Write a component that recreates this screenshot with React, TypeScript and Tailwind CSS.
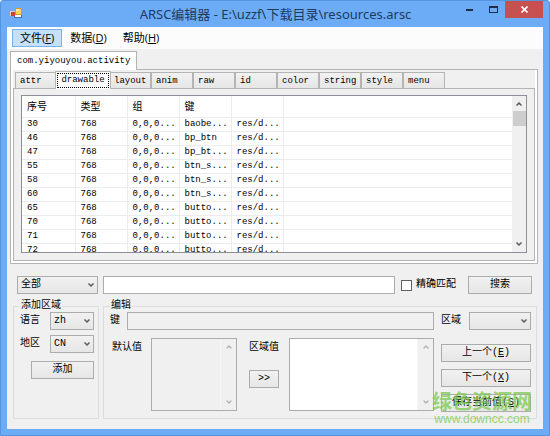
import { useState } from "react";
import { ChevronDown, ChevronUp } from "lucide-react";

const tabs = ["attr", "drawable", "layout", "anim", "raw", "id", "color", "string", "style", "menu"];

const rows = [
  { id: "30", key: "baobe..." },
  { id: "46", key: "bp_btn" },
  { id: "47", key: "bp_bt..." },
  { id: "55", key: "btn_s..." },
  { id: "58", key: "btn_s..." },
  { id: "60", key: "btn_s..." },
  { id: "65", key: "butto..." },
  { id: "70", key: "butto..." },
  { id: "71", key: "butto..." },
  { id: "72", key: "butto..." },
];

const menus = [
  { label: "文件", hotkey: "F" },
  { label: "数据", hotkey: "D" },
  { label: "帮助", hotkey: "H" },
];

const buttonStyle =
  "h-[18px] border border-[#acacac] bg-linear-to-b from-[#f1f1f1] to-[#e6e6e6] text-center leading-4";

const Select = ({ id, label, options, className }: { id: string; label?: string; options: string[]; className: string }) => {
  return (
    <div className={"relative " + className}>
      <select
        id={id}
        aria-label={label}
        className="block h-[18px] w-full appearance-none border border-[#acacac] bg-linear-to-b from-[#f1f1f1] to-[#e6e6e6] pl-[3px] leading-4"
      >
        {options.map((o) => (
          <option key={o}>{o}</option>
        ))}
      </select>
      <ChevronDown className="pointer-events-none absolute right-[3px] top-[5px] size-2" strokeWidth={5} color="#606060" />
    </div>
  );
};

const ScrollText = ({ id, disabled, className }: { id: string; disabled?: boolean; className: string }) => {
  return (
    <div className={"flex h-[73px] border border-[#acacac] " + className}>
      <textarea
        id={id}
        disabled={disabled}
        className={"min-w-0 flex-1 resize-none overflow-hidden " + (disabled ? "bg-[#f0f0f0]" : "bg-white")}
      />
      <div className="flex w-4 flex-col items-center justify-between border-l border-[#f6f6f6] bg-[#f0f0f0] py-1">
        <ChevronUp className="size-2" strokeWidth={4} color="#b0b0b0" />
        <ChevronDown className="size-2" strokeWidth={4} color="#b0b0b0" />
      </div>
    </div>
  );
};

const App = () => {
  const [active, setActive] = useState("drawable");
  const [exact, setExact] = useState(false);

  return (
    <div className="relative flex h-screen flex-col overflow-hidden rounded-t-[3px] border border-[#5394dc] bg-[#6cacf6] px-[6px] pb-[6px] font-['Liberation_Mono','Noto_Sans_CJK_SC',monospace] text-[10px] leading-3 text-black">
      {/* Title bar */}
      <header className="flex h-[26px] shrink-0 items-start">
        <svg className="ml-[3px] mt-[7px] h-[11px] w-3" viewBox="0 0 12 11">
          <rect x="4" y="5" width="8" height="5" fill="#3f6fb5" />
          <rect x="5" y="7" width="6" height="2" fill="#f4f6fa" />
          <rect x="0" y="3" width="5" height="5" fill="#f0c9c4" />
          <rect x="1" y="4" width="4" height="4" fill="#c9413a" />
          <rect x="5" y="0" width="7" height="7" fill="#d79a1e" />
          <rect x="6" y="1" width="5" height="5" fill="#fbd35a" />
          <rect x="6" y="1" width="3" height="2" fill="#fdeaa6" />
        </svg>
        <h1 className="flex-1 pl-[72px] text-center font-['Noto_Sans','Noto_Sans_CJK_SC',sans-serif] text-[13px] leading-[26px] text-[#1d3a5f]">
          ARSC编辑器 - E:\uzzf\下载目录\resources.arsc
        </h1>
        <button aria-label="最小化" className="flex h-[17px] w-6 items-center justify-center">
          <span className="h-[2px] w-[7px] bg-[#1d2f48]" />
        </button>
        <button aria-label="最大化" className="flex h-[17px] w-6 items-center justify-center">
          <span className="h-[7px] w-[9px] border border-t-2 border-[#1d2f48]" />
        </button>
        <button aria-label="关闭" className="flex h-[17px] w-[38px] items-center justify-center bg-[#c75050]">
          <svg className="size-[7px]" viewBox="0 0 7 7" stroke="#fff" strokeWidth="1.6">
            <path d="M0.5 0.5L6.5 6.5M6.5 0.5L0.5 6.5" />
          </svg>
        </button>
      </header>

      <main className="flex min-h-0 flex-1 flex-col bg-[#f0f0f0]">
        {/* Menu */}
        <nav className="flex h-[22px] shrink-0 items-center bg-[#fcfcfc] pl-[5px] font-['Open_Sans','Noto_Sans_CJK_SC',sans-serif] text-[11px]">
          {menus.map((m, i) => (
            <button
              key={m.label}
              className={
                "h-[18px] border px-[7px] leading-4 " + (i === 0 ? "border-[#78b2e6] bg-[#c5e0f8]" : "border-transparent")
              }
            >
              {m.label}(<u>{m.hotkey}</u>)
            </button>
          ))}
        </nav>

        {/* Package tab */}
        <section className="flex min-h-0 flex-1 flex-col px-[3px] pt-[2px] text-[9px]">
          <div className="flex">
            <button className="relative z-10 -mb-px h-[19px] border border-b-0 border-[#b4b4b4] bg-white px-[6px]">
              com.yiyouyou.activity
            </button>
          </div>
          <div className="mr-[2px] flex min-h-0 flex-1 flex-col border border-[#b4b4b4] bg-white px-[2px] pb-[2px]">
            {/* Resource types */}
            <div className="flex h-[18px] shrink-0 items-end bg-[#f0f0f0] pl-[2px]">
              {tabs.map((t) => (
                <button
                  key={t}
                  onClick={() => setActive(t)}
                  className={
                    t === active
                      ? "relative z-10 -mx-[2px] -mb-px h-[18px] w-14 border border-b-0 border-[#b4b4b4] bg-white p-px"
                      : "h-4 w-[42px] border border-b-0 border-[#b4b4b4] bg-linear-to-b from-[#f1f1f1] to-[#e6e6e6] pl-1 text-left"
                  }
                >
                  {t === active ? <span className="block border border-dotted border-black leading-[13px]">{t}</span> : t}
                </button>
              ))}
            </div>
            <div className="flex min-h-0 flex-1 flex-col border border-[#b4b4b4] bg-[#f0f0f0] px-[7px] pb-[7px] pt-[6px]">
              <div className="flex min-h-0 flex-1 border border-[#8c9096] bg-white">
                <div className="min-w-0 flex-1 overflow-hidden">
                  <table className="w-full table-fixed border-collapse">
                    <thead>
                      <tr className="h-[21px] border-b border-[#ececec] text-left text-[10px]">
                        <th className="w-[53px] border-r border-[#ececec] pl-[5px] pt-1 font-normal">序号</th>
                        <th className="w-[52px] border-r border-[#ececec] pl-[5px] pt-1 font-normal">类型</th>
                        <th className="w-[52px] border-r border-[#ececec] pl-[5px] pt-1 font-normal">组</th>
                        <th className="w-[52px] border-r border-[#ececec] pl-[5px] pt-1 font-normal">键</th>
                        <th className="w-[52px] border-r border-[#ececec]" />
                        <th />
                      </tr>
                    </thead>
                    <tbody>
                      {rows.map((r) => (
                        <tr key={r.id} className="h-[14px] border-b border-[#ececec]">
                          <td className="border-r border-[#ececec] pl-[5px]">{r.id}</td>
                          <td className="border-r border-[#ececec] pl-[5px]">768</td>
                          <td className="border-r border-[#ececec] pl-[5px]">0,0,0...</td>
                          <td className="border-r border-[#ececec] pl-[5px]">{r.key}</td>
                          <td className="border-r border-[#ececec] pl-[5px]">res/d...</td>
                          <td />
                        </tr>
                      ))}
                    </tbody>
                  </table>
                </div>
                <div className="flex w-[14px] flex-col items-center bg-[#f0f0f0] py-1">
                  <ChevronUp className="size-2" strokeWidth={5} color="#606060" />
                  <div className="mt-[3px] h-[15px] w-[13px] bg-[#cdcdcd]" />
                  <ChevronDown className="mt-auto size-2" strokeWidth={5} color="#606060" />
                </div>
              </div>
            </div>
          </div>
        </section>

        {/* Search */}
        <div className="mt-3 flex items-center pl-[10px] pr-[11px]">
          <Select id="scope" label="范围" options={["全部"]} className="w-[81px]" />
          <input aria-label="搜索内容" className="ml-[5px] h-[18px] min-w-0 flex-1 border border-[#acacac] bg-white px-1" />
          <input
            id="exact"
            type="checkbox"
            checked={exact}
            onChange={() => setExact(!exact)}
            className="ml-[6px] size-[11px] appearance-none border border-[#606060] bg-white checked:bg-[#606060]"
          />
          <label htmlFor="exact" className="ml-1">
            精确匹配
          </label>
          <button className={buttonStyle + " ml-3 w-16"}>搜索</button>
        </div>

        <div className="mb-[10px] mt-[6px] flex gap-1 pl-[6px] pr-[6px]">
          {/* Add locale */}
          <fieldset className="w-[86px] border border-[#dcdcdc] pl-[6px] pr-1">
            <legend className="px-px">添加区域</legend>
            <div className="flex items-center justify-between">
              <label htmlFor="lang">语言</label>
              <Select id="lang" options={["zh"]} className="w-11" />
            </div>
            <div className="mt-[5px] flex items-center justify-between">
              <label htmlFor="country">地区</label>
              <Select id="country" options={["CN"]} className="w-11" />
            </div>
            <button className={buttonStyle + " ml-auto mt-2 block w-[63px]"}>添加</button>
          </fieldset>

          {/* Edit */}
          <fieldset className="min-w-0 flex-1 border border-[#dcdcdc] pb-[6px] pl-[6px] pr-[5px]">
            <legend className="px-px">编辑</legend>
            <div className="flex items-center gap-[7px]">
              <label htmlFor="key">键</label>
              <input id="key" disabled className="h-[18px] min-w-0 flex-1 border border-[#acacac] bg-[#f0f0f0]" />
              <div className="flex w-[90px] items-center justify-between">
                <label htmlFor="area">区域</label>
                <Select id="area" options={[""]} className="w-[62px]" />
              </div>
            </div>
            <div className="mt-2 flex gap-[7px]">
              <label htmlFor="default" className="w-[34px] pl-[2px] pt-1">
                默认值
              </label>
              <ScrollText id="default" disabled className="w-[86px]" />
              <div className="flex w-[38px] flex-col pl-[5px] pt-1">
                <label htmlFor="value">区域值</label>
                <button className={buttonStyle + " mt-4 w-[30px]"}>&gt;&gt;</button>
              </div>
              <ScrollText id="value" className="min-w-0 flex-1" />
              <div className="flex w-[90px] flex-col gap-[7px] pt-[6px]">
                <button className={buttonStyle}>
                  上一个(<u>E</u>)
                </button>
                <button className={buttonStyle}>
                  下一个(<u>X</u>)
                </button>
                <button className={buttonStyle}>
                  保存当前值(<u>S</u>)
                </button>
              </div>
            </div>
          </fieldset>
        </div>
      </main>

      {/* Site mark */}
      <div className="pointer-events-none absolute bottom-2 right-[17px] text-center text-[#7cc850] opacity-75">
        <p className="font-['Noto_Sans_CJK_SC',sans-serif] text-[20px] font-bold leading-5">绿色资源网</p>
        <p className="font-['Liberation_Sans',sans-serif] text-[12px] leading-4">www.downcc.com</p>
      </div>
    </div>
  );
};

export default App;
